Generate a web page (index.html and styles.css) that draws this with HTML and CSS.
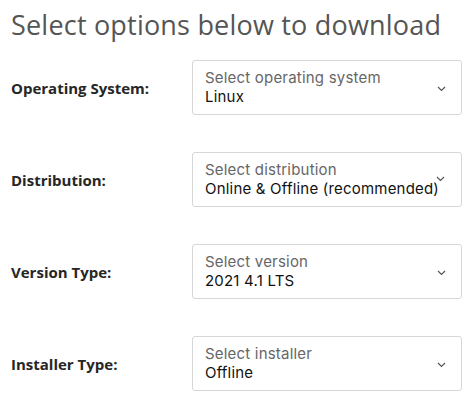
FILE: index.html
```html
<!DOCTYPE html>
<html>
<head>
<meta charset="utf-8">
<link rel="stylesheet" href="styles.css">
</head>
<body>
<div class="page">
  <h1 class="title">Select options below to download</h1>
  <div class="form">
    <div class="row">
      <div class="label">Operating System:</div>
      <div class="select">
        <div class="texts">
          <div class="placeholder">Select operating system</div>
          <div class="value">Linux</div>
        </div>
        <svg class="chev" width="9" height="6" viewBox="0 0 9 6"><path d="M1 1 L4.5 4.5 L8 1" fill="none" stroke="#555" stroke-width="1.2"/></svg>
      </div>
    </div>
    <div class="row">
      <div class="label">Distribution:</div>
      <div class="select">
        <div class="texts">
          <div class="placeholder">Select distribution</div>
          <div class="value">Online &amp; Offline (recommended)</div>
        </div>
        <svg class="chev chev-high" width="9" height="6" viewBox="0 0 9 6"><path d="M1 1 L4.5 4.5 L8 1" fill="none" stroke="#555" stroke-width="1.2"/></svg>
      </div>
    </div>
    <div class="row">
      <div class="label">Version Type:</div>
      <div class="select">
        <div class="texts">
          <div class="placeholder">Select version</div>
          <div class="value">2021 4.1 LTS</div>
        </div>
        <svg class="chev" width="9" height="6" viewBox="0 0 9 6"><path d="M1 1 L4.5 4.5 L8 1" fill="none" stroke="#555" stroke-width="1.2"/></svg>
      </div>
    </div>
    <div class="row">
      <div class="label">Installer Type:</div>
      <div class="select">
        <div class="texts">
          <div class="placeholder">Select installer</div>
          <div class="value">Offline</div>
        </div>
        <svg class="chev" width="9" height="6" viewBox="0 0 9 6"><path d="M1 1 L4.5 4.5 L8 1" fill="none" stroke="#555" stroke-width="1.2"/></svg>
      </div>
    </div>
  </div>
</div>
</body>
</html>
```
FILE: styles.css
```css
html, body { margin: 0; padding: 0; background: #fff; }
body { font-family: "Open Sans", "Noto Sans", sans-serif; }
.page { padding: 6px 0 0 11px; }
.title {
  margin: 0;
  font-size: 27px;
  font-weight: 400;
  color: #555;
  line-height: 38px;
  letter-spacing: 0.2px;
}
.form {
  display: flex;
  flex-direction: column;
  gap: 37px;
  margin-top: 16px;
}
.row {
  display: grid;
  grid-template-columns: 181px 270px;
  align-items: center;
}
.label {
  font-size: 15px;
  font-weight: 700;
  color: #262626;
}
.select {
  box-sizing: border-box;
  height: 55px;
  border: 1px solid #d7d7d7;
  border-radius: 3px;
  position: relative;
  padding: 8px 12px 0 12px;
}
.texts {
  display: flex;
  flex-direction: column;
  font-family: Inter, "Open Sans", sans-serif;
  letter-spacing: 0.2px;
}
.placeholder {
  font-size: 15px;
  color: #666;
  line-height: 18.5px;
}
.value {
  font-size: 15px;
  color: #111;
  line-height: 18.5px;
  white-space: nowrap;
}
.chev {
  position: absolute;
  right: 15px;
  top: 25px;
}
.chev-high { top: 23px; right: 16px; }
```
